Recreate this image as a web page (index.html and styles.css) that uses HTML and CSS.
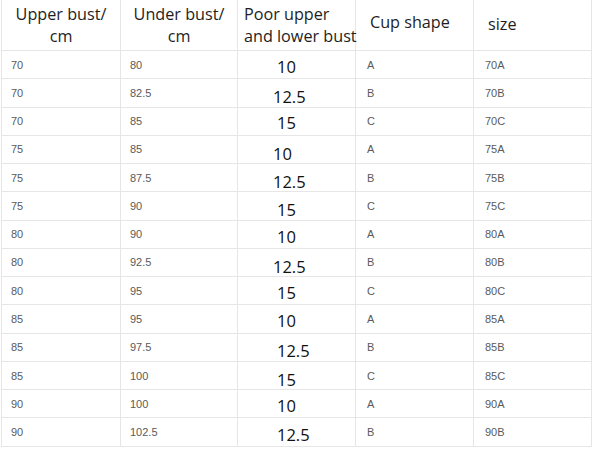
FILE: index.html
```html
<!DOCTYPE html>
<html>
<head>
<meta charset="utf-8">
<link rel="stylesheet" href="styles.css">
</head>
<body>
<div class="size-table">
  <div class="th center">Upper bust/<br>cm</div>
  <div class="th center">Under bust/<br>cm</div>
  <div class="th left">Poor upper<br>and lower bust</div>
  <div class="th single">Cup shape</div>
  <div class="th single low">size</div>

  <div class="td">70</div><div class="td">80</div><div class="td big">10</div><div class="td">A</div><div class="td">70A</div>
  <div class="td">70</div><div class="td">82.5</div><div class="td big l4">12.5</div><div class="td">B</div><div class="td">70B</div>
  <div class="td">70</div><div class="td">85</div><div class="td big">15</div><div class="td">C</div><div class="td">70C</div>
  <div class="td">75</div><div class="td">85</div><div class="td big l4">10</div><div class="td">A</div><div class="td">75A</div>
  <div class="td">75</div><div class="td">87.5</div><div class="td big l4">12.5</div><div class="td">B</div><div class="td">75B</div>
  <div class="td">75</div><div class="td">90</div><div class="td big l3">15</div><div class="td">C</div><div class="td">75C</div>
  <div class="td">80</div><div class="td">90</div><div class="td big l2">10</div><div class="td">A</div><div class="td">80A</div>
  <div class="td">80</div><div class="td">92.5</div><div class="td big l4">12.5</div><div class="td">B</div><div class="td">80B</div>
  <div class="td">80</div><div class="td">95</div><div class="td big">15</div><div class="td">C</div><div class="td">80C</div>
  <div class="td">85</div><div class="td">95</div><div class="td big">10</div><div class="td">A</div><div class="td">85A</div>
  <div class="td">85</div><div class="td">97.5</div><div class="td big l3">12.5</div><div class="td">B</div><div class="td">85B</div>
  <div class="td">85</div><div class="td">100</div><div class="td big l3">15</div><div class="td">C</div><div class="td">85C</div>
  <div class="td">90</div><div class="td">100</div><div class="td big">10</div><div class="td">A</div><div class="td">90A</div>
  <div class="td">90</div><div class="td">102.5</div><div class="td big l2">12.5</div><div class="td">B</div><div class="td">90B</div>
</div>
</body>
</html>
```
FILE: styles.css
```css
html, body {
  margin: 0;
  padding: 0;
  background: #ffffff;
}
.size-table {
  display: grid;
  grid-template-columns: 120px 117px 118px 118px 118px;
  grid-template-rows: 51px;
  grid-auto-rows: 28.28px;
  width: 592px;
  margin-left: 0;
  border-right: 1px solid #e6e6e6;
  box-sizing: border-box;
}
.th, .td {
  box-sizing: border-box;
  border-left: 1px solid #e6e6e6;
  border-bottom: 1px solid #e6e6e6;
  overflow: visible;
}
.size-table > :nth-child(5n+1) {
  border-left: 1px solid #e6e6e6;
  margin-left: 1px;
}
.th {
  font-family: "Open Sans", "Noto Sans", sans-serif;
  font-size: 16.2px;
  line-height: 22px;
  color: #1e1e1e;
  padding-top: 3px;
  white-space: nowrap;
}
.th.center { text-align: center; }
.th.left { padding-left: 6px; position: relative; z-index: 1; }
.th.single { padding-top: 11px; padding-left: 14px; }
.th.single.low { padding-top: 13px; }
.td {
  font-family: "Liberation Sans", Arial, sans-serif;
  font-size: 11px;
  color: #5a5a5a;
  padding-left: 9px;
  display: flex;
  align-items: center;
}
.size-table > .td:nth-child(5n+4),
.size-table > .td:nth-child(5n+5) { padding-left: 11px; }
.td.big {
  font-family: "Open Sans", "Noto Sans", sans-serif;
  font-size: 16.5px;
  color: #111;
  padding-left: 39px;
  padding-top: 3px;
}
.td.big.l2 { padding-top: 5px; }
.td.big.l3 { padding-top: 7px; }
.td.big.l4 { padding-top: 8px; padding-left: 35px; }
.td.big.l2, .td.big.l3 { padding-left: 39px; }
```
